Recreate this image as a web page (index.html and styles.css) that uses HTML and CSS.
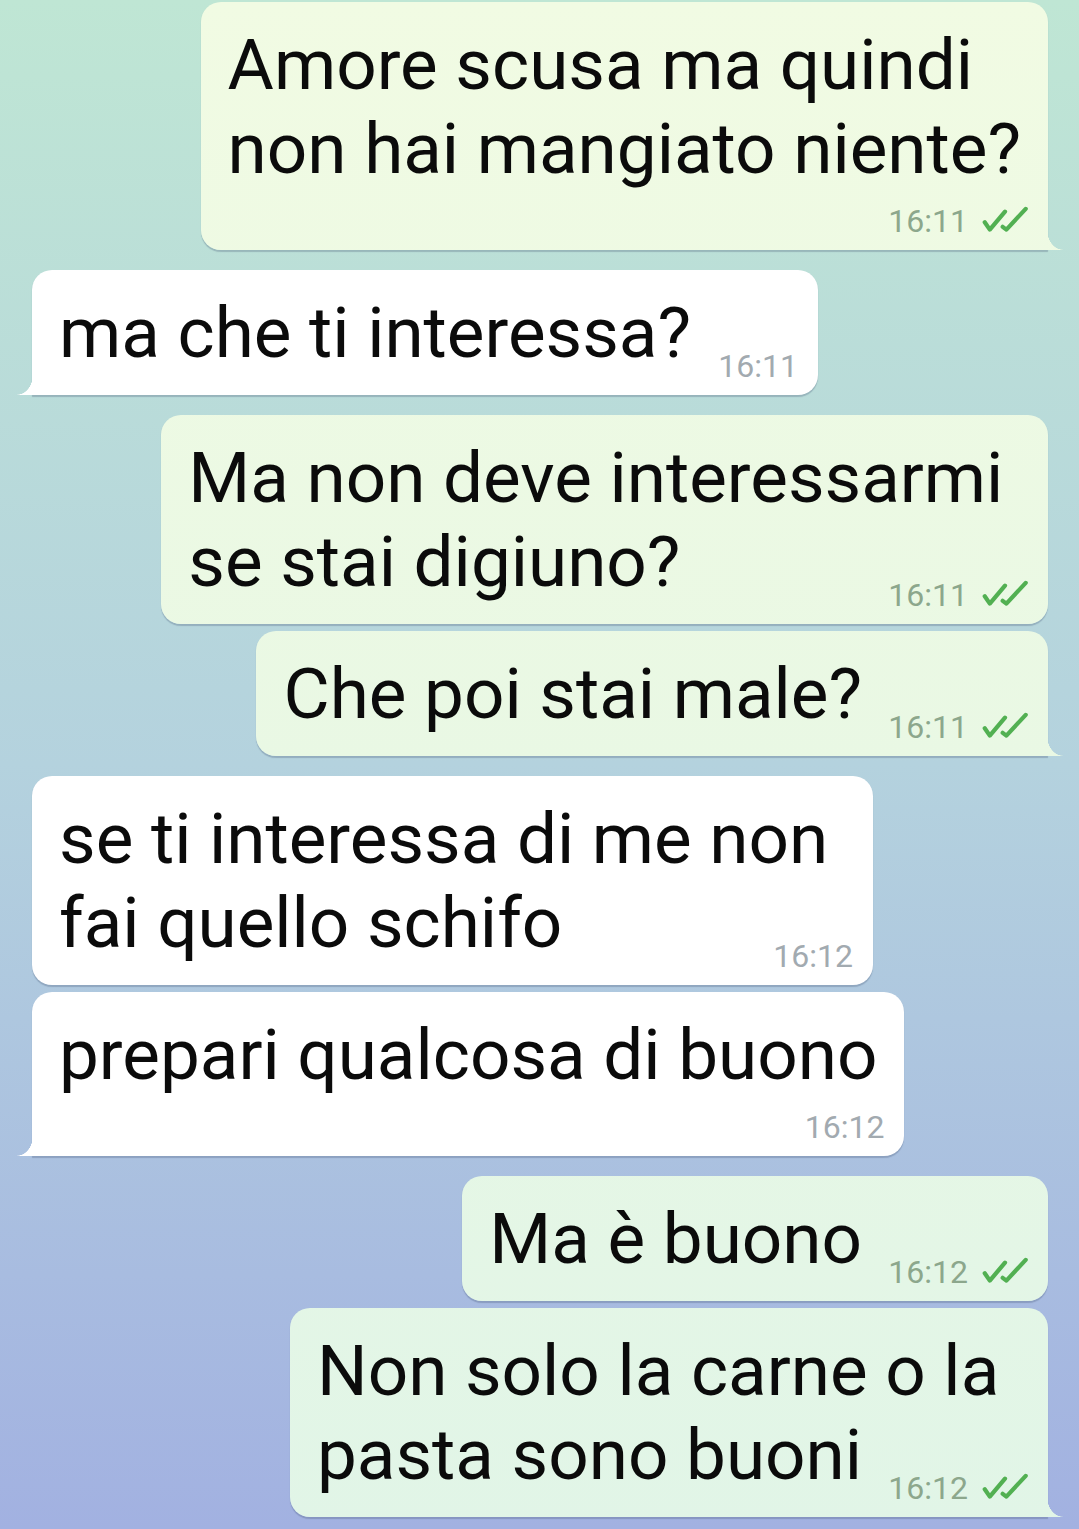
FILE: index.html
```html
<!DOCTYPE html>
<html lang="it">
<head>
    <meta charset="UTF-8">
    <meta name="viewport" content="width=device-width, initial-scale=1.0">
    <title>Chat</title>
    <link rel="stylesheet" href="styles.css">
</head>
<body>
    <div class="chat">
        <div class="group out">
            <div class="msg tail tall">
                <p class="text">Amore scusa ma quindi&nbsp;<br>non hai mangiato niente?</p>
                <span class="meta">16:11 <svg class="check" viewBox="0 0 50 28"><path d="M3 17.5 L8.5 25.5 L25 6 M22.5 22.5 L26.5 25.5 L47.5 3"/></svg></span>
            </div>
        </div>

        <div class="group in">
            <div class="msg tail">
                <p class="text">ma che ti interessa?<span class="spacer"></span></p>
                <span class="meta">16:11</span>
            </div>
        </div>

        <div class="group out">
            <div class="msg">
                <p class="text">Ma non deve interessarmi&nbsp;<br>se stai digiuno?<span class="spacer"></span></p>
                <span class="meta">16:11 <svg class="check" viewBox="0 0 50 28"><path d="M3 17.5 L8.5 25.5 L25 6 M22.5 22.5 L26.5 25.5 L47.5 3"/></svg></span>
            </div>
            <div class="msg tail">
                <p class="text">Che poi stai male?<span class="spacer"></span></p>
                <span class="meta">16:11 <svg class="check" viewBox="0 0 50 28"><path d="M3 17.5 L8.5 25.5 L25 6 M22.5 22.5 L26.5 25.5 L47.5 3"/></svg></span>
            </div>
        </div>

        <div class="group in">
            <div class="msg">
                <p class="text">se ti interessa di me non&nbsp;<br>fai quello schifo<span class="spacer"></span></p>
                <span class="meta">16:12</span>
            </div>
            <div class="msg tail tall">
                <p class="text">prepari qualcosa di buono</p>
                <span class="meta">16:12</span>
            </div>
        </div>

        <div class="group out">
            <div class="msg">
                <p class="text">Ma è buono<span class="spacer"></span></p>
                <span class="meta">16:12 <svg class="check" viewBox="0 0 50 28"><path d="M3 17.5 L8.5 25.5 L25 6 M22.5 22.5 L26.5 25.5 L47.5 3"/></svg></span>
            </div>
            <div class="msg tail">
                <p class="text">Non solo la carne o la&nbsp;<br>pasta sono buoni<span class="spacer"></span></p>
                <span class="meta">16:12 <svg class="check" viewBox="0 0 50 28"><path d="M3 17.5 L8.5 25.5 L25 6 M22.5 22.5 L26.5 25.5 L47.5 3"/></svg></span>
            </div>
        </div>
    </div>
</body>
</html>
```

FILE: styles.css
```css
html, body {
    margin: 0;
    height: 100%;
}
body {
    font-family: Roboto, "Noto Sans", Arial, sans-serif;
    background: linear-gradient(#bfe6d4, #b4d2de 50%, #a2b1e1);
    overflow: hidden;
}
.chat {
    display: flex;
    flex-direction: column;
    gap: 20px;
    padding: 2px 31px 0 32px;
}
.group {
    display: flex;
    flex-direction: column;
    gap: 7px;
}
.group.out {
    align-items: flex-end;
}
.group.in {
    align-items: flex-start;
}
.msg {
    position: relative;
    padding: 21px 27px 20px 27px;
    border-radius: 20px;
    box-shadow: 0 1.5px 1px rgba(60, 80, 110, 0.28);
    background: #fff;
}
.out .msg {
    background: linear-gradient(#f1fbe3, #e9f8e4 50%, #e1f5e7) fixed;
}
.msg.tall {
    padding-bottom: 59px;
}
.text {
    margin: 0;
    font-size: 71px;
    line-height: 84px;
    color: #0b0b0b;
    white-space: nowrap;
}
.spacer {
    display: inline-block;
    width: 159px;
    height: 10px;
}
.in .spacer {
    width: 100px;
}
.meta {
    position: absolute;
    right: 20px;
    bottom: 13px;
    display: flex;
    align-items: center;
    gap: 14px;
    font-size: 32px;
    line-height: 32px;
    color: #8ca78c;
}
.in .meta {
    color: #a2aab0;
}
.check {
    width: 46px;
    height: 26px;
    margin-top: -4px;
    fill: none;
    stroke: #52b052;
    stroke-width: 4.6;
    stroke-linecap: round;
    stroke-linejoin: round;
}

/* bubble tails */
.msg.tail::after {
    content: "";
    position: absolute;
    bottom: 0;
    width: 16px;
    height: 20px;
    background: inherit;
}
.out .msg.tail {
    border-bottom-right-radius: 0;
}
.out .msg.tail::after {
    right: -15px;
    -webkit-mask: radial-gradient(ellipse 16px 20px at 100% 0, transparent 97%, #000 100%);
    mask: radial-gradient(ellipse 16px 20px at 100% 0, transparent 97%, #000 100%);
}
.in .msg.tail {
    border-bottom-left-radius: 0;
}
.in .msg.tail::after {
    left: -15px;
    -webkit-mask: radial-gradient(ellipse 16px 20px at 0 0, transparent 97%, #000 100%);
    mask: radial-gradient(ellipse 16px 20px at 0 0, transparent 97%, #000 100%);
}
```
